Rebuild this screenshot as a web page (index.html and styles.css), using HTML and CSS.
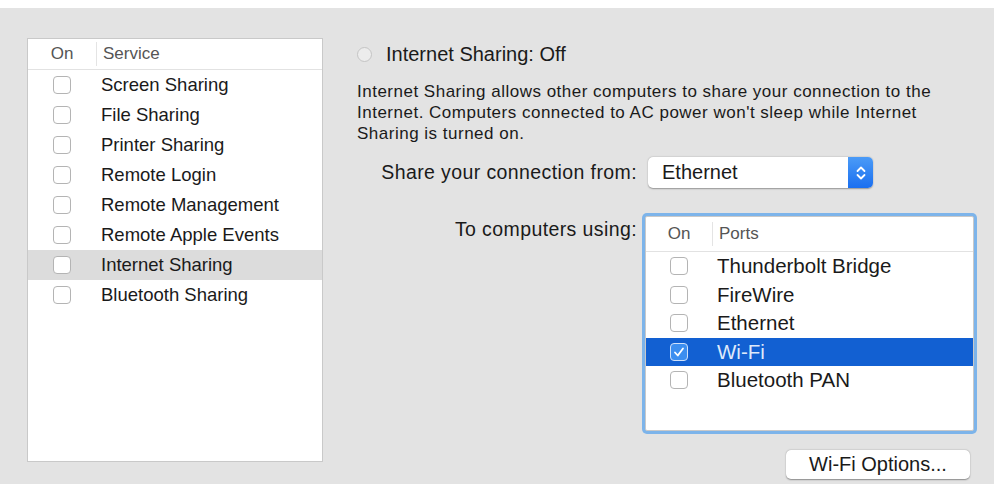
FILE: index.html
```html
<!DOCTYPE html>
<html lang="en">
<head>
    <meta charset="UTF-8">
    <title>Sharing</title>
    <link rel="stylesheet" href="styles.css">
</head>
<body>
    <div class="window">
        <div class="services">
            <div class="list-head">
                <span class="col-on">On</span>
                <span class="col-name">Service</span>
            </div>
            <div class="row"><span class="col-on"><span class="check"></span></span><span class="col-name">Screen Sharing</span></div>
            <div class="row"><span class="col-on"><span class="check"></span></span><span class="col-name">File Sharing</span></div>
            <div class="row"><span class="col-on"><span class="check"></span></span><span class="col-name">Printer Sharing</span></div>
            <div class="row"><span class="col-on"><span class="check"></span></span><span class="col-name">Remote Login</span></div>
            <div class="row"><span class="col-on"><span class="check"></span></span><span class="col-name">Remote Management</span></div>
            <div class="row"><span class="col-on"><span class="check"></span></span><span class="col-name">Remote Apple Events</span></div>
            <div class="row current"><span class="col-on"><span class="check"></span></span><span class="col-name">Internet Sharing</span></div>
            <div class="row"><span class="col-on"><span class="check"></span></span><span class="col-name">Bluetooth Sharing</span></div>
        </div>

        <div class="detail">
            <div class="status">
                <span class="radio"></span>
                <span>Internet Sharing: Off</span>
            </div>
            <p class="info">Internet Sharing allows other computers to share your connection to the Internet. Computers connected to AC power won't sleep while Internet Sharing is turned on.</p>

            <div class="form">
                <label class="form-label">Share your connection from:</label>
                <div class="popup">
                    <span>Ethernet</span>
                    <span class="popup-arrows">
                        <svg width="12" height="18" viewBox="0 0 12 18"><path d="M2.5 7 6 3.5 9.5 7M2.5 11 6 14.5 9.5 11" fill="none" stroke="#fff" stroke-width="1.8" stroke-linecap="round" stroke-linejoin="round"/></svg>
                    </span>
                </div>

                <label class="form-label top">To computers using:</label>
                <div class="ports">
                    <div class="list-head">
                        <span class="col-on">On</span>
                        <span class="col-name">Ports</span>
                    </div>
                    <div class="row"><span class="col-on"><span class="check"></span></span><span class="col-name">Thunderbolt Bridge</span></div>
                    <div class="row"><span class="col-on"><span class="check"></span></span><span class="col-name">FireWire</span></div>
                    <div class="row"><span class="col-on"><span class="check"></span></span><span class="col-name">Ethernet</span></div>
                    <div class="row selected"><span class="col-on"><span class="check on">
                        <svg width="14" height="14" viewBox="0 0 14 14"><path d="M3 7.5 5.8 10.5 11 3.5" fill="none" stroke="#fff" stroke-width="1.8" stroke-linecap="round" stroke-linejoin="round"/></svg>
                    </span></span><span class="col-name">Wi-Fi</span></div>
                    <div class="row"><span class="col-on"><span class="check"></span></span><span class="col-name">Bluetooth PAN</span></div>
                </div>
            </div>

            <div class="actions">
                <button class="btn">Wi-Fi Options...</button>
            </div>
        </div>
    </div>
</body>
</html>
```

FILE: styles.css
```css
body {
    margin: 0;
    background-color: white;
    font-family: "Liberation Sans", Arial, sans-serif;
    color: #1a1a1a;
}
.window {
    display: flex;
    margin: 8px 6px 0 0;
    height: 476px;
    padding: 30px 20px 0 27px;
    box-sizing: border-box;
    background-color: #e3e3e3;
    gap: 34px;
}

/* lists */
.services {
    width: 296px;
    height: 424px;
    flex-shrink: 0;
    background-color: white;
    border: 1px solid #c9c9c9;
    box-sizing: border-box;
}
.list-head {
    display: flex;
    height: 30px;
    align-items: center;
    border-bottom: 1px solid #e2e2e2;
    font-size: 17px;
    color: #555;
}
.list-head .col-name {
    border-left: 1px solid #e4e4e4;
    padding-left: 6px;
    height: 24px;
    line-height: 24px;
}
.row {
    display: flex;
    align-items: center;
    height: 30px;
    font-size: 18.5px;
}
.col-on {
    width: 68px;
    display: flex;
    justify-content: center;
    flex-shrink: 0;
}
.row .col-name {
    padding-left: 5px;
}
.row.current {
    background-color: #dcdcdc;
}
.check {
    display: flex;
    align-items: center;
    justify-content: center;
    width: 18px;
    height: 18px;
    border: 1px solid #b4b4b4;
    border-radius: 4px;
    background-color: white;
    box-sizing: border-box;
}
.check.on {
    background-color: #3c8ef0;
    border-color: #cfe1fb;
}

/* right side */
.detail {
    flex: 1;
    display: flex;
    flex-direction: column;
}
.status {
    display: flex;
    align-items: center;
    gap: 14px;
    font-size: 20px;
    margin: 5px 0 0 0;
}
.radio {
    width: 15px;
    height: 15px;
    border: 1px solid #c4c4c4;
    border-radius: 50%;
    background-color: #ececec;
    box-sizing: border-box;
}
.info {
    margin: 15px 0 0;
    font-size: 17px;
    letter-spacing: 0.5px;
    line-height: 21px;
    width: 580px;
}
.form {
    display: grid;
    grid-template-columns: 280px 1fr;
    column-gap: 11px;
    margin-top: 13px;
}
.form-label {
    text-align: right;
    font-size: 19.5px;
    letter-spacing: 0.4px;
    align-self: center;
}
.form-label.top {
    align-self: start;
    margin-top: 30px;
}
.popup {
    display: flex;
    justify-content: space-between;
    align-items: center;
    width: 225px;
    height: 31px;
    background-color: white;
    border-radius: 5px;
    box-shadow: 0 0.5px 1.5px rgba(0, 0, 0, 0.35);
    font-size: 20px;
    padding-left: 14px;
    box-sizing: border-box;
    overflow: hidden;
}
.popup-arrows {
    display: flex;
    align-items: center;
    justify-content: center;
    width: 25px;
    height: 100%;
    background: linear-gradient(#4b9bf7, #1a6ff0);
}
.ports {
    grid-column: 2;
    width: 327px;
    height: 213px;
    margin: 28px 0 0 -3px;
    background-color: white;
    border: 1px solid #c9c9c9;
    box-shadow: 0 0 0 3px #7db4ea;
    border-radius: 2px;
}
.ports .list-head {
    height: 34px;
}
.ports .col-on {
    width: 66px;
}
.ports .row {
    height: 28.5px;
    font-size: 20.5px;
}
.row.selected {
    background-color: #1260d2;
    color: #dfe9fa;
}
.actions {
    display: flex;
    justify-content: flex-end;
    margin: 19px 4px 0 0;
}
.btn {
    width: 184px;
    height: 29px;
    font-family: inherit;
    font-size: 20px;
    color: #1a1a1a;
    background-color: white;
    border: none;
    border-radius: 5px;
    box-shadow: 0 0.5px 1.5px rgba(0, 0, 0, 0.4);
}
```
